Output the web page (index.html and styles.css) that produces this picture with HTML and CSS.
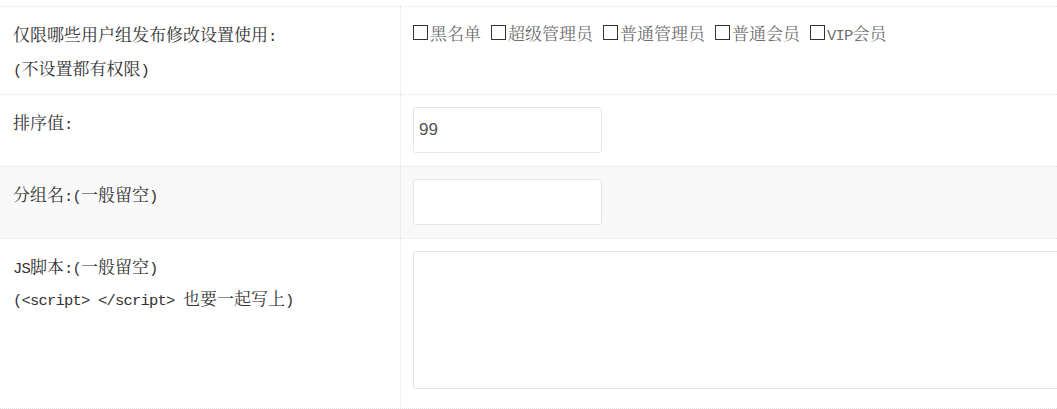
FILE: index.html
```html
<!DOCTYPE html>
<html lang="zh-CN">
<head>
<meta charset="utf-8">
<title>设置</title>
<link rel="stylesheet" href="styles.css">
</head>
<body>
<div class="form">
  <div class="row">
    <div class="label">
      <div>仅限哪些用户组发布修改设置使用<span class="en">:</span></div>
      <div class="label-sub"><span class="en">(</span>不设置都有权限<span class="en">)</span></div>
    </div>
    <div class="field field-checks">
      <label class="check"><input type="checkbox" class="box"><span>黑名单</span></label>
      <label class="check"><input type="checkbox" class="box"><span>超级管理员</span></label>
      <label class="check"><input type="checkbox" class="box"><span>普通管理员</span></label>
      <label class="check"><input type="checkbox" class="box"><span>普通会员</span></label>
      <label class="check"><input type="checkbox" class="box"><span><span class="en">VIP</span>会员</span></label>
    </div>
  </div>
  <div class="row">
    <div class="label">排序值<span class="en">:</span></div>
    <div class="field"><input type="text" class="text-input" value="99"></div>
  </div>
  <div class="row row-alt">
    <div class="label">分组名<span class="en">:(</span>一般留空<span class="en">)</span></div>
    <div class="field"><input type="text" class="text-input" value=""></div>
  </div>
  <div class="row">
    <div class="label">
      <div><span class="en">JS</span>脚本<span class="en">:(</span>一般留空<span class="en">)</span></div>
      <div><span class="en">(&lt;script&gt; &lt;/script&gt; </span>也要一起写上<span class="en">)</span></div>
    </div>
    <div class="field field-area"><textarea class="text-area"></textarea></div>
  </div>
</div>
</body>
</html>
```
FILE: styles.css
```css
html, body {
  margin: 0;
  padding: 0;
  background: #fff;
  overflow: hidden;
}

.form {
  margin-top: 6px;
  border-bottom: 1px dotted #e2e2e2;
  font-family: "Noto Serif CJK SC", "Noto Sans CJK SC", serif;
  font-size: 17px;
  color: #333;
}

.en {
  font-family: "Liberation Mono", "Courier New", monospace;
  font-size: 15.5px;
  letter-spacing: -0.8px;
  line-height: 1;
  white-space: pre;
}

.row {
  display: grid;
  grid-template-columns: 401px 1fr;
  border-top: 1px dotted #e2e2e2;
}

.row-alt {
  background: #f9f9f9;
}

.label {
  box-sizing: border-box;
  border-right: 1px dotted #e2e2e2;
  padding: 11px 13px 10px;
  line-height: 32px;
}

.label-sub {
  margin-top: 2px;
}

.field {
  padding: 12px 12px 13px;
  overflow: hidden;
  min-width: 0;
}

.field-checks {
  display: flex;
  align-items: center;
  align-self: start;
  height: 32px;
  padding-top: 10px;
  color: #707070;
  white-space: nowrap;
}

.check {
  display: inline-flex;
  align-items: center;
  margin-right: 10px;
  line-height: 32px;
}

.box {
  appearance: none;
  -webkit-appearance: none;
  box-sizing: border-box;
  width: 15px;
  height: 15px;
  margin: 0 2px 2px 0;
  border: 1px solid #333;
  background: #fff;
  border-radius: 0;
}

.text-input {
  display: block;
  box-sizing: border-box;
  width: 189px;
  height: 46px;
  margin: 0;
  padding: 0 5px;
  border: 1px solid #e6e6e6;
  border-radius: 3px;
  background: #fff;
  font-family: "Liberation Sans", Arial, sans-serif;
  font-size: 17px;
  color: #555;
  outline: none;
}

.field-area {
  padding-bottom: 19px;
}

.text-area {
  display: block;
  box-sizing: border-box;
  width: 700px;
  height: 138px;
  margin: 0;
  padding: 6px;
  border: 1px solid #e6e6e6;
  border-radius: 3px;
  background: #fff;
  resize: none;
  outline: none;
}
```
